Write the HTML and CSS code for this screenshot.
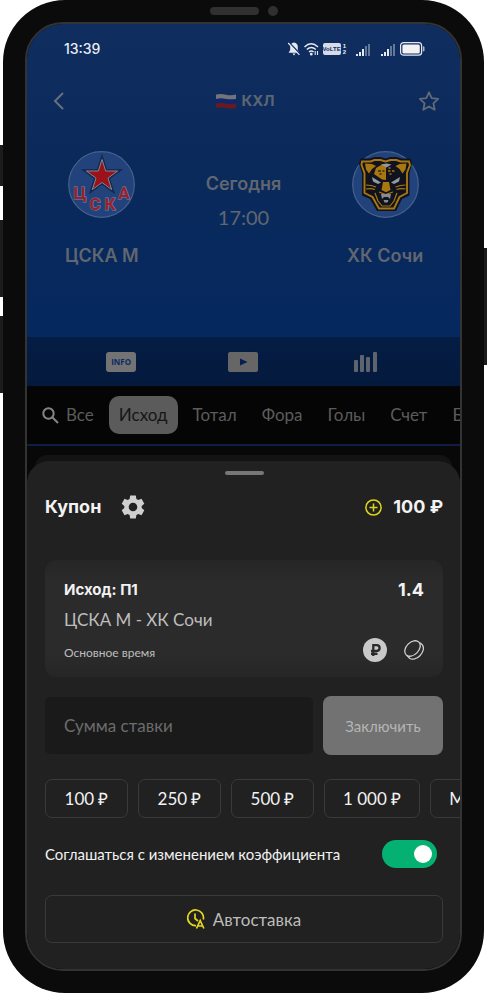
FILE: index.html
```html
<!DOCTYPE html>
<html lang="ru">
<head>
  <meta charset="UTF-8">
  <meta name="viewport" content="width=device-width, initial-scale=1.0">
  <title>ЦСКА М - ХК Сочи</title>
  <link rel="stylesheet" href="styles.css">
</head>
<body>
  <div class="phone">
    <span class="side-key side-key-mute"></span>
    <span class="side-key side-key-up"></span>
    <span class="side-key side-key-down"></span>
    <span class="side-key side-key-power"></span>

    <div class="bezel">
      <span class="speaker"></span>
      <span class="camera"></span>
    </div>

    <main class="screen">
      <section class="hero">
        <div class="status">
          <time>13:39</time>
          <div class="status-icons">
            <svg width="12" height="14" viewBox="0 0 12 14">
              <path d="M6 .5C3.400.5 2.200 2.800 2.200 5v3L.6 10.800h10.800L9.800 8V5C9.800 2.800 8.600.5 6 .5zM4.400 11.500h3.200L6 13.600z" fill="#e4e9f3"/>
              <path d="M1 .5l11 11.500" stroke="#102d5f" stroke-width="1.600"/>
              <path d="M.2 1l11.200 11.900" stroke="#e4e9f3" stroke-width="1.200"/>
            </svg>
            <svg class="wifi" width="15" height="14" viewBox="0 0 15 14" fill="none" stroke="#e4e9f3" stroke-width="1.400">
              <path d="M.5 5Q7.200-1.500 14 5M2.800 7.500q4.500-4 9 0M5 10q2.300-2 4.600 0"/>
              <circle cx="7.300" cy="12.200" r=".7" fill="#e4e9f3"/>
              <path d="M11.200 9v4M13.500 9v4" stroke-width="1.100"/>
            </svg>
            <span class="volte">VoLTE</span>
            <span class="sims"><i>1</i><i>2</i></span>
            <svg class="signal" width="14" height="13" viewBox="0 0 14 13" fill="#e4e9f3">
              <path d="M0 11h2v2H0zM3 9h2v4H3zM6 6h2v7H6z"/>
              <path d="M9 3h2v10H9zM12 1h2v12h-2z" opacity=".4"/>
            </svg>
            <svg class="signal" width="14" height="13" viewBox="0 0 14 13" fill="#e4e9f3">
              <path d="M0 11h2v2H0zM3 9h2v4H3zM6 6h2v7H6z"/>
              <path d="M9 3h2v10H9zM12 1h2v12h-2z" opacity=".4"/>
            </svg>
            <svg width="25" height="14" viewBox="0 0 25 14">
              <rect x=".6" y=".6" width="21" height="12.600" rx="3" fill="none" stroke="#e4e9f3" stroke-width="1.200"/>
              <rect x="2.400" y="2.400" width="17.400" height="9" rx="1.500" fill="#f2f2f2"/>
              <path d="M22.800 4.200q1.700 0 1.700 1.400v2.600q0 1.400-1.700 1.400z" fill="#a9b3c6"/>
            </svg>
          </div>
        </div>

        <nav class="topbar">
          <button class="icon-button" aria-label="Назад">
            <svg width="12" height="18" viewBox="0 0 12 18" fill="none" stroke="#68707c" stroke-width="2" stroke-linecap="round">
              <path d="M9.500 1.500L2 9l7.500 7.500"/>
            </svg>
          </button>
          <h1 class="league">
            <svg width="20" height="15" viewBox="0 0 20 15">
              <path d="M0 .5Q5-.5 10 .7T20 .5V5Q15 6 10 5T0 5z" fill="#73747b"/>
              <path d="M0 5q5-1 10 0t10 0v4.500q-5 1-10 0T0 9.500z" fill="#11266d"/>
              <path d="M0 9.500q5-1 10 0t10 0V14q-5 1-10 0T0 14z" fill="#691a1c"/>
            </svg>
            КХЛ
          </h1>
          <button class="icon-button" aria-label="В избранное">
            <svg width="22" height="20" viewBox="0 0 22 20" fill="none" stroke="#606a78" stroke-width="1.800" stroke-linejoin="round">
              <path d="M11 1.300l2.700 5.900 6.500.7-4.800 4.400 1.300 6.400-5.700-3.200-5.700 3.200 1.300-6.400L1.800 7.900l6.500-.7z"/>
            </svg>
          </button>
        </nav>

        <div class="match">
          <div class="team">
            <svg width="67" height="67" viewBox="0 0 67 67">
              <circle cx="33.500" cy="33.500" r="32.800" fill="#21427a" stroke="#47618c" stroke-width="1.200"/>
              <path d="M34 8.500L37.700 20h12l-9.700 7.100 3.700 11.500-9.700-7.100-9.700 7.100L28 27.100 18.300 20h12z" fill="#9c1219" stroke="#17264c" stroke-width="3.600"/>
              <path d="M34 8.500L37.700 20h12l-9.700 7.100 3.700 11.500-9.700-7.100-9.700 7.100L28 27.100 18.300 20h12z" fill="#9c1219" stroke="#7f8798" stroke-width="1"/>
              <g class="crest">
                <text x="12" y="48">Ц</text>
                <text x="27" y="59">С</text>
                <text x="42" y="59">К</text>
                <text x="56" y="48">А</text>
              </g>
            </svg>
            <span>ЦСКА М</span>
          </div>
          <div class="kickoff">
            <strong>Сегодня</strong>
            <span>17:00</span>
          </div>
          <div class="team">
            <svg width="67" height="67" viewBox="0 0 67 67">
              <circle cx="33.500" cy="33.500" r="32.800" fill="#21427a" stroke="#47618c" stroke-width="1.200"/>
              <path d="M8.500 7.500h9l5-1.500h6l5 1.500L38.500 6h6l5 1.500h9L60 13l-2.500 9v22.500L50 48l-6 12H25l-7-12-8-3.500V22L7 13z" fill="#10131d"/>
              <path d="M10 10.500h8.500l4-1.500h6l5 1.500 5-1.500h6l4 1.500H57l1 3.500-3 8v20l-7.500 4-5.500 11.500H27L20.500 46 12.500 42V22L9.500 14z" fill="#10131d" stroke="#a87710" stroke-width="1.900"/>
              <path d="M13 12.500l7 .5 4 2-4 3-3 4.500-3-4zM54.500 12.500l-7 .5-4 2 4 3 3 4.500 3-4z" fill="#a87710"/>
              <path d="M24 17l6-3.500 4-.5v16l-4-.5-8-5.500zM31 31h6l1.500 8-4 2h-1l-4-2z" fill="#a87710"/>
              <path d="M29 13.500l5.500-1 5 1-5 3z" fill="#9298a4"/>
              <path d="M20 26l9 5.500-3 1.500-5-2.500zM48 26l-9 5.500 3 1.500 5-2.500z" fill="#9298a4"/>
              <path d="M14 34q5 0 10 2M14 38q5-1 9 .5M53.500 34q-5 0-10 2M53.500 38q-5-1-9 .5M23 42l3 8 4 5h8l4-5 3-8M27 41l6.500 2.500L41 41" fill="none" stroke="#a87710" stroke-width="1.200"/>
              <path d="M29 43h10l-1 5-2-2h-4l-2 2zM31.500 49h5l-1 2.500h-3z" fill="#858a95"/>
              <path d="M26 20h3m1.500 0h2M27.500 23h2" stroke="#30270f" stroke-width="1.400"/>
              <path d="M36 20h2.500m1.500 0h2.500M37.500 23h2M36.500 17h2" stroke="#a87710" stroke-width="1.400"/>
            </svg>
            <span>ХК Сочи</span>
          </div>
        </div>
      </section>

      <nav class="media">
        <button class="media-tab"><span class="info">INFO</span></button>
        <button class="media-tab" aria-label="Трансляция">
          <svg width="30" height="20" viewBox="0 0 30 20">
            <rect width="30" height="20" rx="2" fill="#666"/>
            <path d="M12 6.500v7l7.500-3.500z" fill="#051f50"/>
          </svg>
        </button>
        <button class="media-tab" aria-label="Статистика">
          <svg width="23" height="20" viewBox="0 0 23 20" fill="#5e646e">
            <rect y="8" width="4" height="12" rx="1"/>
            <rect x="6" y="3" width="4" height="17" rx="1"/>
            <rect x="12" y="5" width="4" height="15" rx="1"/>
            <rect x="19" width="4" height="20" rx="1"/>
          </svg>
        </button>
      </nav>

      <nav class="markets">
        <button class="market">
          <svg width="17" height="17" viewBox="0 0 17 17" fill="none" stroke="#858585" stroke-width="2">
            <circle cx="6.500" cy="6.500" r="5.200"/>
            <path d="M10.300 10.300l5.700 5.700"/>
          </svg>
          Все
        </button>
        <button class="market market-active">Исход</button>
        <button class="market">Тотал</button>
        <button class="market">Фора</button>
        <button class="market">Голы</button>
        <button class="market">Счет</button>
        <button class="market">Б</button>
      </nav>

      <div class="events"></div>

      <section class="sheet">
        <div class="handle"></div>

        <header class="sheet-head">
          <h2>Купон</h2>
          <button class="icon-button" aria-label="Настройки">
            <svg width="24" height="24" viewBox="0 0 24 24" fill="#cfcfcf">
              <path fill-rule="evenodd" d="M9.200.5h5.600l.6 3.400 1.900 1.100 3.200-1.200 2.800 4.900-2.600 2.200v2.200l2.600 2.200-2.800 4.900-3.200-1.200-1.900 1.100-.6 3.400H9.200l-.6-3.400L6.700 19l-3.200 1.200-2.800-4.900 2.600-2.200v-2.200L.7 8.700l2.800-4.900L6.700 5l1.900-1.100zM12 7.700a4.300 4.300 0 1 0 0 8.600 4.300 4.300 0 0 0 0-8.600z"/>
            </svg>
          </button>
          <button class="balance">
            <svg width="17" height="17" viewBox="0 0 17 17" fill="none" stroke="#dfd41c" stroke-width="1.500">
              <circle cx="8.500" cy="8.500" r="7.600"/>
              <path d="M8.500 4.500v8M4.500 8.500h8"/>
            </svg>
            100 ₽
          </button>
        </header>

        <article class="bet">
          <div class="bet-row bet-title">
            <h3>Исход: П1</h3>
            <span class="odds">1.4</span>
          </div>
          <p class="bet-match">ЦСКА М - ХК Сочи</p>
          <div class="bet-row">
            <span class="bet-period">Основное время</span>
            <div class="coins">
              <svg width="24" height="24" viewBox="0 0 24 24">
                <circle cx="12" cy="12" r="12" fill="#c9c9c9"/>
                <path d="M10.300 18V7.200h3.400a2.900 2.900 0 0 1 0 5.800H8M8 15.800h6.500" fill="none" stroke="#2a2a2a" stroke-width="2.300"/>
              </svg>
              <svg width="20" height="20" viewBox="0 0 20 20" fill="none" stroke="#cfcfcf" stroke-width="1.300">
                <ellipse cx="8.500" cy="8.500" rx="9" ry="6.200" transform="rotate(-45 8.500 8.500)"/>
                <path d="M15.500 2.500l2.800 2.300c2.300 3 .8 7.700-2.400 10.900s-7.600 4.600-10.300 2.500L2.800 15.300"/>
              </svg>
            </div>
          </div>
        </article>

        <form class="stake">
          <input class="stake-sum" type="text" name="sum" placeholder="Сумма ставки" aria-label="Сумма ставки">
          <button class="stake-submit" type="button">Заключить</button>
        </form>

        <div class="presets">
          <button class="preset">100 ₽</button>
          <button class="preset">250 ₽</button>
          <button class="preset">500 ₽</button>
          <button class="preset">1 000 ₽</button>
          <button class="preset">М</button>
        </div>

        <div class="agree">
          <label for="agree">Соглашаться с изменением коэффициента</label>
          <input class="toggle" type="checkbox" id="agree" name="agree" checked>
        </div>

        <button class="autobet">
          <svg width="18" height="20" viewBox="0 0 18 20" fill="none" stroke="#e3d81b" stroke-width="1.700">
            <path d="M9 16.700A7.900 7.900 0 1 1 16.300 10.500"/>
            <path d="M8 4.500v5l3 2.500"/>
            <path d="M9.500 19.500l3.700-8 3.700 8M11 17h4.500"/>
          </svg>
          Автоставка
        </button>
      </section>
    </main>
  </div>
</body>
</html>
```

FILE: styles.css
```css
* {
  box-sizing: border-box;
  margin: 0;
  padding: 0;
}

body {
  background: #fff;
  font-family: Lato, "Open Sans", sans-serif;
}

button,
input {
  font: inherit;
  color: inherit;
}

button {
  border: none;
  background: none;
  cursor: pointer;
}

svg {
  display: block;
  flex: none;
}

/* device */

.phone {
  position: relative;
  margin: 0 3px;
  padding: 0 22px 22px;
  border-radius: 62px;
  background: #0b0b0b;
}

.side-key {
  position: absolute;
  left: -3px;
  width: 3px;
  background: #1c1c1c;
}

.side-key-mute {
  top: 145px;
  height: 41px;
}

.side-key-up {
  top: 220px;
  height: 77px;
}

.side-key-down {
  top: 316px;
  height: 77px;
}

.side-key-power {
  top: 248px;
  right: -3px;
  left: auto;
  height: 117px;
}

.bezel {
  display: flex;
  align-items: center;
  justify-content: center;
  gap: 9px;
  height: 22px;
}

.speaker {
  width: 49px;
  height: 8px;
  border-radius: 4px;
  background: #303030;
}

.camera {
  width: 10px;
  height: 10px;
  border-radius: 50%;
  background: #303030;
}

.screen {
  overflow: hidden;
  border: 2px solid #333;
  border-radius: 38px;
  background: #080808;
}

/* match */

.hero {
  padding-bottom: 69px;
  background: linear-gradient(#102d5f, #0b2a5b 40%, #05285f);
}

.status {
  display: flex;
  align-items: center;
  justify-content: space-between;
  height: 50px;
  padding: 0 35px 0 37px;
  color: #e9edf5;
  font: 500 14px/20px Inter, Roboto, sans-serif;
}

.status-icons {
  display: flex;
  align-items: center;
}

.wifi {
  margin: 0 4px;
}

.volte {
  border-radius: 2px;
  background: #d5dbe8;
  color: #102d5f;
  font: bold 6px/12px "Liberation Sans", sans-serif;
}

.sims {
  display: grid;
  margin: 0 10px 0 2px;
  font: bold 6px/6px "Liberation Sans", sans-serif;
}

.sims i {
  font-style: normal;
}

.signal {
  margin-right: 11px;
}

.signal + .signal {
  margin-right: 5px;
}

.topbar {
  display: flex;
  align-items: center;
  justify-content: space-between;
  height: 54px;
  padding: 0 20px 0 26px;
}

.icon-button {
  min-width: 20px;
}

.league {
  display: flex;
  align-items: center;
  gap: 5px;
  color: #5c6571;
  font: 700 15px/24px Inter, sans-serif;
}

.match {
  display: grid;
  grid-template-columns: repeat(3, 1fr);
  padding: 23px 4px 0;
  color: #61666f;
  text-align: center;
}

.team {
  display: flex;
  flex-direction: column;
  align-items: center;
  gap: 26px;
  font: 600 18px/24px Inter, sans-serif;
}

.crest {
  fill: #99202b;
  stroke: #7688ab;
  stroke-width: 1px;
  paint-order: stroke;
  font: bold 17px Roboto, sans-serif;
  text-anchor: middle;
}

.kickoff {
  display: grid;
  align-content: start;
  gap: 9px;
  padding-top: 21px;
  font-size: 20px;
  line-height: 24px;
}

.kickoff strong {
  font: 600 18px/24px Inter, sans-serif;
}

.media {
  display: grid;
  grid-template-columns: repeat(3, 1fr);
  height: 49px;
  padding: 0 33px;
  background: linear-gradient(#051c44, #041a3d);
}

.media-tab {
  display: flex;
  align-items: center;
  justify-content: center;
}

.info {
  width: 30px;
  border-radius: 3px;
  background: #737373;
  color: #0a2a66;
  font: bold 8px/20px "Open Sans", sans-serif;
}

/* markets */

.markets {
  display: flex;
  align-items: center;
  gap: 5px;
  height: 60px;
  padding-left: 5px;
  overflow: hidden;
  border-bottom: 2px solid #111d47;
  background: #050505;
  color: #5c5c5c;
  font-size: 17px;
  line-height: 38px;
}

.market {
  display: flex;
  flex: none;
  align-items: center;
  gap: 7px;
  padding: 0 10px;
}

.market-active {
  border-radius: 10px;
  background: #5b5b5b;
  color: #161616;
}

.events {
  height: 35px;
  padding: 9px 8px 0;
}

.events::before {
  content: "";
  display: block;
  height: 26px;
  border-radius: 12px 12px 0 0;
  background: #131313;
}

/* coupon */

.sheet {
  position: relative;
  margin-top: -20px;
  padding: 10px 17px 26px 18px;
  border-radius: 22px 22px 0 0;
  background: #212121;
  color: #f2f2f2;
}

.handle {
  width: 39px;
  height: 4px;
  margin: 0 auto 20px;
  border-radius: 2px;
  background: #777;
}

.sheet-head {
  display: flex;
  align-items: center;
  gap: 20px;
  height: 24px;
  margin-bottom: 41px;
}

.sheet-head h2,
.balance {
  font: 700 18px/24px Inter, sans-serif;
}

.balance {
  display: flex;
  align-items: center;
  gap: 11px;
  margin-left: auto;
}

.bet {
  display: grid;
  gap: 6px;
  margin-bottom: 19px;
  padding: 18px 19px 15px;
  border-radius: 12px;
  background: linear-gradient(#262626, #2b2b2b 20%, #2b2b2b 80%, #262626);
}

.bet-row {
  display: flex;
  align-items: center;
  justify-content: space-between;
}

.bet-title,
.bet-match {
  height: 24px;
  line-height: 24px;
}

.bet-title h3 {
  font: 700 15px/24px Inter, sans-serif;
}

.odds {
  font: 700 18px/24px Inter, sans-serif;
}

.bet-match {
  color: #bdbdbd;
  font-size: 17px;
}

.bet-period {
  padding-top: 4px;
  color: #bdbdbd;
  font-size: 12px;
}

.coins {
  display: flex;
  align-items: center;
  gap: 17px;
}

.stake {
  display: flex;
  align-items: center;
  gap: 10px;
  margin-bottom: 24px;
}

.stake-sum {
  flex: 1;
  min-width: 0;
  height: 57px;
  padding: 0 19px;
  border: none;
  border-radius: 5px;
  background: #1a1a1a;
  font-size: 17px;
}

.stake-sum::placeholder {
  color: #6c6c6c;
}

.stake-submit {
  width: 120px;
  height: 59px;
  border-radius: 8px;
  background: #727272;
  color: #b5b5b5;
  font-size: 15px;
}

.presets {
  display: flex;
  gap: 10px;
  margin: 0 -17px 22px 0;
  overflow: hidden;
}

.preset {
  flex: none;
  min-width: 83px;
  height: 39px;
  padding: 0 18px;
  border: 1px solid #3a3a3a;
  border-radius: 7px;
  font-size: 17px;
}

.preset:last-child {
  min-width: 0;
}

.agree {
  display: flex;
  align-items: center;
  justify-content: space-between;
  margin-bottom: 27px;
  padding-right: 6px;
  font-size: 15px;
}

.toggle {
  display: flex;
  align-items: center;
  width: 55px;
  height: 28px;
  padding: 0 5px;
  border-radius: 14px;
  background: #555;
  appearance: none;
  cursor: pointer;
}

.toggle::before {
  content: "";
  width: 18px;
  height: 18px;
  border-radius: 50%;
  background: #fff;
}

.toggle:checked {
  justify-content: flex-end;
  background: #04b173;
}

.autobet {
  display: flex;
  align-items: center;
  justify-content: center;
  gap: 8px;
  width: 100%;
  height: 48px;
  border: 1px solid #3a3a3a;
  border-radius: 7px;
  color: #bdbdbd;
  font-size: 17px;
}
```
